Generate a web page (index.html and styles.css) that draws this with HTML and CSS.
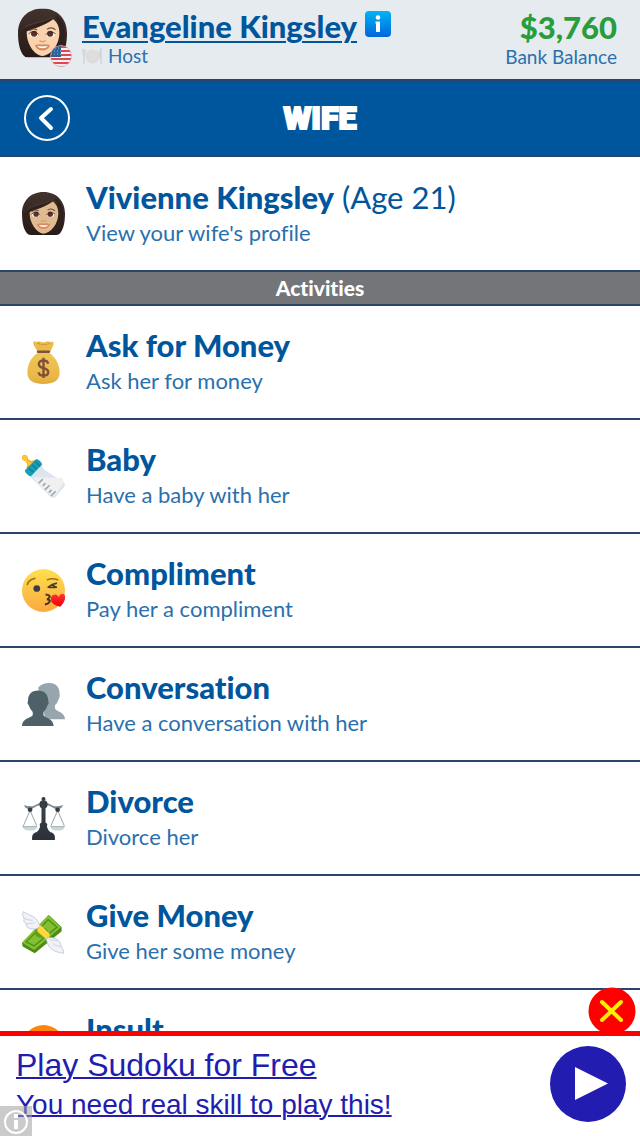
FILE: index.html
```html
<!DOCTYPE html>
<html lang="en">
<head>
<meta charset="utf-8">
<meta name="viewport" content="width=device-width, initial-scale=1">
<title>Wife</title>
<link rel="stylesheet" href="styles.css">
</head>
<body>
<svg class="defs" width="0" height="0" aria-hidden="true">
  <defs>
    <linearGradient id="hair" x1="0" y1="0" x2="0" y2="1"><stop offset="0" stop-color="#43332f"/><stop offset="1" stop-color="#271a17"/></linearGradient>
    <linearGradient id="info" x1="0" y1="0" x2="0" y2="1"><stop offset="0" stop-color="#00b4f5"/><stop offset="1" stop-color="#0066dc"/></linearGradient>
    <linearGradient id="gold" x1="0" y1="0" x2="0" y2="1"><stop offset="0" stop-color="#efc755"/><stop offset=".8" stop-color="#eab648"/><stop offset="1" stop-color="#e0a83c"/></linearGradient>
    <linearGradient id="smile" x1="0" y1="0" x2="0" y2="1"><stop offset="0" stop-color="#ffdf4f"/><stop offset="1" stop-color="#fba93f"/></linearGradient>
    <linearGradient id="heart" x1="0" y1="0" x2="0" y2="1"><stop offset="0" stop-color="#ff3340"/><stop offset="1" stop-color="#f00000"/></linearGradient>
    <linearGradient id="iron" x1="0" y1="0" x2="0" y2="1"><stop offset="0" stop-color="#3b434c"/><stop offset="1" stop-color="#2c3038"/></linearGradient>
    <symbol id="face" viewBox="0 0 64 64">
      <path fill="url(#hair)" d="M32 0C12 0 0 14 0 32c0 12 2 23 7 29q2 3 6 3h38q4 0 6-3c5-6 7-17 7-29C64 14 52 0 32 0z"/>
      <path class="skin" d="M11 29c11-3 22-6 35-15 5 4 8 9 8 18 0 16-11 29-22 30C21 61 11 46 11 29z"/>
      <path fill="#2f211d" d="M3 32c12-12 30-12 45-23C40 20 24 24 11 30v14L3 45z"/>
      <path fill="#2f211d" d="M48 9c5 8 4 12 7 18 1 16-5 28-15 34 11-2 20-11 21-29C61 18 55 11 48 9z"/>
      <path d="M9 24C21 17 35 19 49 9" fill="none" stroke="#4c3832" stroke-width="1.500"/>
      <path d="M15 29q5-4 10-1M38 27q6-4 11 1" fill="none" stroke="#6b4c3d" stroke-width="1.500"/>
      <ellipse cx="20.500" cy="34" rx="5.500" ry="3.500" fill="#fff"/><ellipse cx="42.500" cy="34" rx="5.500" ry="3.500" fill="#fff"/>
      <circle cx="21" cy="33" r="4" fill="#5d3029"/><circle cx="42" cy="33" r="4" fill="#5d3029"/>
      <path d="M14 33q7-6 13 1M36 34q7-6 13-1" fill="none" stroke="#39231e"/>
      <path d="M28 42q4 3 8 0" fill="none" stroke="#d7a27d" stroke-width="2"/>
      <path d="M22 48q5-2 10-1 5-1 10 1-3 7-10 7t-10-7z" fill="#d98a61"/><path d="M25 49q7 1 14 0-2 3-7 3t-7-3z" fill="#fff"/>
    </symbol>
  </defs>
</svg>
<div class="app">
  <header class="top">
    <div class="avatar">
      <svg class="face pale" viewBox="0 0 64 64"><use href="#face"/></svg>
      <svg class="flag" viewBox="0 0 22 22">
        <clipPath id="round"><circle cx="11" cy="11" r="10.500"/></clipPath>
        <g clip-path="url(#round)"><path fill="#f5eff0" d="M0 0h22v22H0z"/><path stroke="#dc4754" stroke-width="2" d="M0 2h22M0 6h22M0 10h22M0 14h22M0 18h22M0 22h22"/><path fill="#2a6196" d="M0 0h11v12H0z"/><path stroke="#9bbbd5" stroke-dasharray="1 2" d="M2 3h9M1 6h10M1 9h10"/></g>
        <circle cx="11" cy="11" r="10.500" fill="none" stroke="#d9a5ad" stroke-width=".6"/>
      </svg>
    </div>
    <div class="who">
      <div class="nameline">
        <a class="name" href="#me">Evangeline Kingsley</a>
        <svg class="info" viewBox="0 0 26 26"><rect width="26" height="26" rx="4" fill="url(#info)"/><circle cx="13" cy="6.500" r="2.300" fill="#fff"/><path fill="#fff" d="M10.500 10.500H15V21h-4v-8.500h-.5z"/></svg>
      </div>
      <div class="job">
        <svg class="plate" viewBox="0 0 21 17"><circle cx="10.500" cy="8.500" r="7" fill="#dddddb"/><circle cx="10.500" cy="8.500" r="4.500" fill="#e0dedc"/><path d="M1 1v4q0 2 1 2t1-2V1M2 6v10M19 16V1q-2 3-1 8h1" fill="none" stroke="#d0d6da" stroke-width="1.500"/></svg>
        <span>Host</span>
      </div>
    </div>
    <div class="bank"><strong>$3,760</strong><span>Bank Balance</span></div>
  </header>
  <nav class="bar">
    <button class="back" type="button" aria-label="Back"><svg viewBox="0 0 46 46"><circle cx="23" cy="23" r="22" fill="none" stroke="#fff" stroke-width="2"/><path d="M27 14l-10 9 10 10" fill="none" stroke="#fff" stroke-width="4" stroke-linecap="round" stroke-linejoin="round"/></svg></button>
    <h1>WIFE</h1>
  </nav>
  <main class="list">
    <a class="row" href="#profile">
      <svg class="icon tan" viewBox="0 0 64 64"><use href="#face"/></svg>
      <span class="text"><span class="title"><b>Vivienne Kingsley</b> (Age 21)</span><span class="sub">View your wife's profile</span></span>
    </a>
    <h2 class="section">Activities</h2>
    <a class="row" href="#ask">
      <svg class="icon" viewBox="0 0 64 64"><path fill="url(#gold)" d="M23 18C13 25 8 35 8 47c0 12 9 17 24 17s24-5 24-17c0-12-6-22-15-29z"/><path fill="#eabd4b" d="M23 16C20 9 16 7 17 2q1-3 5 0 3-3 6-1 4 2 8 0 3-2 6 1 5-3 5 1c0 5-3 8-5 13z"/><path fill="#bc8426" d="M22 2q3 5 7 2 6 3 9 0 3 2 4-2l-4 3q-4-2-8 1-4-2-8-4z"/><path d="M24 16h16" stroke="#805139" stroke-width="4" stroke-linecap="round"/><path d="M32 25v30M39 34q-1-5-7-5t-7 5q0 5 7 6.500t7 6q0 5-7 5t-7-5" fill="none" stroke="#805139" stroke-width="3.500"/></svg>
      <span class="text"><b class="title">Ask for Money</b><span class="sub">Ask her for money</span></span>
    </a>
    <a class="row" href="#baby">
      <svg class="icon" viewBox="0 0 64 64"><path fill="#f9ae12" d="M0 4q0-5 5-4 4 1 4 6l4 3q8-3 13 1L10 28q-5-7-2-14L5 9q-5-1-5-5z"/><path fill="#ffc83a" d="M1 3q2-3 6-1 1 3 1 6l5 4 6-1-7 9-3-7-4-4Q0 6 1 3z"/><path fill="#dce4ef" d="M28 14l5 8 29 18q3 3 1 7L50 62q-3 3-7 1L15 35l-3-4z"/><path fill="#f0f0f0" d="M18 33l42 1q3 4 1 9L49 60q-3 3-6 1L20 38z"/><path d="M21 6q7 2 9 8L13 32q-7-3-9-9z" fill="#159fb6"/><path d="M20 10l7 7M15 14l7 7M10 19l7 7" stroke="#0b8197" stroke-width="2"/><path d="M25 42l6-6M31 46l4-4M34 52l7-7M40 56l4-4M43 61l7-7" stroke="#9fa7ae" stroke-width="2.500"/></svg>
      <span class="text"><b class="title">Baby</b><span class="sub">Have a baby with her</span></span>
    </a>
    <a class="row" href="#compliment">
      <svg class="icon" viewBox="0 0 64 64"><circle cx="32" cy="32" r="32" fill="url(#smile)"/><circle cx="22" cy="29" r="5" fill="#3d3e42"/><path d="M8 23q2-7 11-9M38 16q7-3 15 0" fill="none" stroke="#9a741b" stroke-width="2.500" stroke-linecap="round"/><path d="M52 21q-7 1-13 6 6 1 13 0M43 23l8 4" fill="none" stroke="#4a3d26" stroke-width="2.500" stroke-linejoin="round"/><path d="M35 38q8 1 6 4t-4 3q6 1 4 4t-7 4" fill="none" stroke="#4a3522" stroke-width="3"/><path fill="url(#heart)" d="M57 56Q43 53 43 45q0-7 7-7 4 1 5 4 1-5 6-5 4 1 3 8-2 7-7 11z"/></svg>
      <span class="text"><b class="title">Compliment</b><span class="sub">Pay her a compliment</span></span>
    </a>
    <a class="row" href="#conversation">
      <svg class="icon" viewBox="0 0 64 64"><path fill="#97a6ad" d="M41 0c10 0 15 7 15 16q1 4-1 7-2 7-6 10v5c2 5 15 5 15 16H35L24 7q5-7 17-7z"/><path fill="#4e6068" d="M24 11c10 0 15 7 15 15q2 3-1 7-2 7-6 10v5c2 4 15 5 15 16H0c0-11 13-12 16-16v-5q-4-4-6-10-3-4-1-7c0-9 5-15 15-15z"/></svg>
      <span class="text"><b class="title">Conversation</b><span class="sub">Have a conversation with her</span></span>
    </a>
    <a class="row" href="#divorce">
      <svg class="icon" viewBox="0 0 64 64"><path d="M32 7q-8 2-14 6-7 2-15-1l2 4q5 3 11 1 7-5 16-5t16 5q6 2 11-1l2-4q-8 3-15 1-6-4-14-6z" fill="#7b8c94"/><path d="M12 20L2 43M12 20l10 23M53 20L43 43M53 20l10 23" stroke="#9faab0" stroke-width="1.500"/><path d="M0 43h23q-1 7-11 7T0 43zM42 43h22q-1 7-11 7t-11-7z" fill="#ccd5d8"/><path d="M1 44h21M43 44h20" stroke="#9aa5ab"/><circle cx="12" cy="19" r="3.500" fill="#333b43"/><circle cx="53" cy="19" r="3.500" fill="#333b43"/><circle cx="32" cy="11" r="6" fill="url(#iron)"/><circle cx="32" cy="3" r="3" fill="#333b43"/><path fill="url(#iron)" d="M29 11h6v27q4 2 2 6 1 5 5 8 7 2 7 8v4H15v-4q0-6 7-8 4-3 5-8-2-4 2-6z"/></svg>
      <span class="text"><b class="title">Divorce</b><span class="sub">Divorce her</span></span>
    </a>
    <a class="row" href="#give">
      <svg class="icon" viewBox="0 0 64 64"><path fill="#4c8c15" d="M0 48L40 6l19 18v6L19 63 1 53z"/><path fill="#83bf31" d="M0 47L39 6l19 18-40 34z"/><path d="M6 46L39 13l13 11-34 28z" fill="none" stroke="#4d9219" stroke-width="2"/><ellipse cx="29" cy="32" rx="10" ry="8" fill="#5da020"/><path fill="#ffcf24" d="M23 26l5-5 13 13v6l-4 3-14-12z"/><path d="M26 23l14 13M24 27l13 12" stroke="#ffe15b" stroke-width="2"/><path fill="#f0f2f7" stroke="#b6b9cb" d="M27 23C22 7 13 8 2 1q-3 6 1 10-2 5 3 8 0 6 6 7 8 3 15-3z"/><path fill="#f0f2f7" stroke="#b6b9cb" d="M36 41c3 15 8 19 26 22-1-6-1-8-4-10 0-6-2-7-4-9q-7-7-18-3z"/><path d="M3 11q7 3 13 3M6 19q8 0 13-2M58 53q-9-1-12-5M53 44q-8-1-12-1" fill="none" stroke="#c4c6d5"/></svg>
      <span class="text"><b class="title">Give Money</b><span class="sub">Give her some money</span></span>
    </a>
    <a class="row" href="#insult">
      <svg class="icon" viewBox="0 0 64 64"><circle cx="32" cy="32" r="32" fill="#ff850c"/></svg>
      <span class="text"><b class="title">Insult</b></span>
    </a>
  </main>
  <aside class="ad">
    <button class="close" type="button" aria-label="Close ad"><svg viewBox="0 0 48 48"><circle cx="24" cy="24" r="23.500" fill="red"/><path d="M14 15l19 18M33 15L14 33" stroke="#fff000" stroke-width="4" stroke-linecap="round"/></svg></button>
    <div class="adtext"><a class="big" href="#play">Play Sudoku for Free</a><a class="small" href="#skill">You need real skill to play this!</a></div>
    <button class="play" type="button" aria-label="Play"><svg viewBox="0 0 76 76"><circle cx="38" cy="38" r="38" fill="#221db0"/><path fill="#fff" d="M25 21l33 16.500L25 54z"/></svg></button>
    <button class="about" type="button" aria-label="About this ad"><svg viewBox="0 0 32 32"><circle cx="16" cy="16" r="11" fill="none" stroke="#fff" stroke-width="2"/><path fill="#fff" d="M14 8h4v4h-4zM14 14h4v9h-4z"/></svg></button>
  </aside>
</div>
</body>
</html>
```
FILE: styles.css
```css
* { box-sizing: border-box; }
body { margin: 0; background: #fff; font-family: Lato, "Open Sans", sans-serif; font-variant-ligatures: none; color: #00569c; }
a { color: inherit; text-decoration: none; }
button { display: block; padding: 0; border: 0; background: none; cursor: pointer; }
svg { display: block; }
.defs { position: absolute; }
.app { display: flex; flex-direction: column; height: 100vh; overflow: hidden; }

.top { display: flex; flex: none; padding: 8px 23px 11px 18px; background: #e6ebef; border-bottom: 2px solid #2b446b; }
.avatar { position: relative; width: 50px; height: 60px; margin-right: 14px; }
.face { width: 49px; height: 50px; }
.pale { fill: #fbd2ae; }
.tan { fill: #e0bb8f; }
.flag { position: absolute; right: -4px; bottom: 1px; width: 22px; height: 22px; }
.who { flex: 1; }
.nameline { display: flex; align-items: center; gap: 8px; height: 36px; }
.name { font-size: 31px; line-height: 36px; font-weight: 900; text-decoration: underline; text-decoration-thickness: 2px; text-underline-offset: 3px; }
.info { width: 26px; height: 26px; margin-bottom: 4px; }
.job { display: flex; align-items: center; gap: 5px; font-size: 19px; line-height: 24px; color: #2a70ad; }
.plate { width: 21px; height: 17px; }
.bank { display: flex; flex-direction: column; align-items: flex-end; font-size: 19px; line-height: 22px; color: #2a70ad; }
.bank strong { padding-top: 1px; font-size: 31px; line-height: 37px; font-weight: 900; color: #279d3c; }

.bar { display: flex; flex: none; align-items: center; justify-content: center; height: 76px; padding: 0 24px; background: #00569c; border-bottom: 2px solid #2b446b; color: #fff; }
.back { width: 46px; height: 46px; }
.bar h1 { flex: 1; margin: 0 46px 0 0; text-align: center; font: 900 32px/40px Roboto, sans-serif; -webkit-text-stroke: 2px #fff; }

.list { flex: 1; min-height: 0; overflow: hidden; }
.row { display: flex; align-items: center; gap: 21px; min-height: 114px; padding: 10px 21px 10px 22px; border-bottom: 2px solid #2b446b; }
.row:first-child { min-height: 115px; }
.icon { flex: none; width: 43px; height: 43px; }
.text, .title, .sub { display: block; }
.text { min-height: 70px; }
.title { font-size: 31px; line-height: 36px; font-weight: 400; color: #00569c; }
b.title, .title b { font-weight: 900; }
.sub { margin-top: 2px; font-size: 22px; line-height: 32px; color: #2a70ad; }
.section { margin: 0; background: #747578; border-bottom: 2px solid #2b446b; color: #fff; text-align: center; font-size: 21px; line-height: 32px; font-weight: 900; }

.ad { position: relative; display: flex; flex: none; align-items: center; justify-content: space-between; padding: 8px 14px 12px 16px; border-top: 5px solid red; background: #fff; font-family: "Liberation Sans", sans-serif; color: #221db0; }
.adtext a { display: block; text-decoration: underline; text-decoration-thickness: 2px; }
.big { font-size: 32px; line-height: 42px; }
.small { font-size: 28px; line-height: 38px; }
.adtext { margin-bottom: 0; }
.play { flex: none; width: 76px; height: 76px; }
.close { position: absolute; right: 4px; top: -49px; width: 48px; height: 48px; }
.about { position: absolute; left: 0; bottom: 0; width: 32px; height: 30px; background: rgba(160, 160, 160, .55); }
```
